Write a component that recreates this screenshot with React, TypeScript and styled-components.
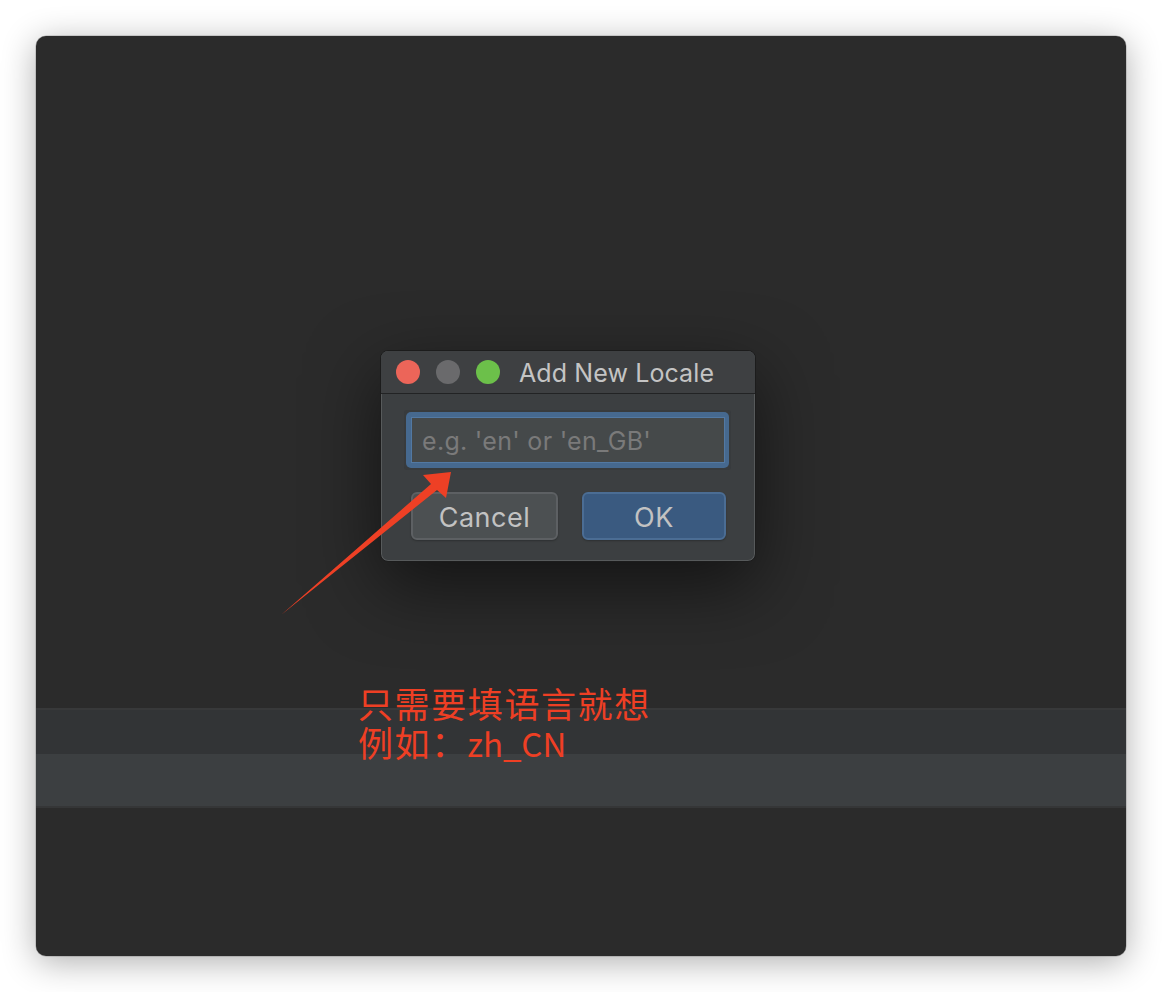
import * as React from 'react'
import styled, { createGlobalStyle } from 'styled-components'

const GlobalStyle = createGlobalStyle`
    html, body {
        margin: 0;
        padding: 0;
        background: #ffffff;
    }
    * {
        box-sizing: border-box;
    }
`

export default function App() {
    return (
        <Page>
            <GlobalStyle />
            <Window>
                <Stage>
                    <Dialog>
                        <TitleBar>
                            <Lights>
                                <Light color={'#ec6559'} />
                                <Light color={'#6a6a6c'} />
                                <Light color={'#6cc04a'} />
                            </Lights>
                            <Title>Add New Locale</Title>
                        </TitleBar>
                        <DialogBody>
                            <FocusHalo>
                                <FocusRing>
                                    <Field placeholder="e.g. 'en' or 'en_GB'" />
                                </FocusRing>
                            </FocusHalo>
                            <Buttons>
                                <Button>Cancel</Button>
                                <Button primary>OK</Button>
                            </Buttons>
                        </DialogBody>
                    </Dialog>
                </Stage>
                <Divider tone={'#38393a'} />
                <Band tone={'#323436'} size={44} />
                <Band tone={'#3c3f41'} size={52} />
                <Divider tone={'#353637'} />
                <Rest />

                <ArrowLayer width="1090" height="920" viewBox="0 0 1090 920">
                    <polygon
                        points="245,579 395,448 387,439 415,436 410,462 401,454"
                        fill="#ee4025"
                    />
                </ArrowLayer>
                <Note>
                    <NoteLine>只需要填语言就想</NoteLine>
                    <NoteLine>
                        例如：<Latin> zh_CN</Latin>
                    </NoteLine>
                </Note>
            </Window>
        </Page>
    )
}

const Page = styled.div`
    width: 1162px;
    height: 992px;
    padding: 36px;
`
const Window = styled.div`
    position: relative;
    display: flex;
    flex-direction: column;
    width: 1090px;
    height: 920px;
    background-color: #2b2b2b;
    border-radius: 10px;
    box-shadow: 0 0 0 0.5px rgba(0, 0, 0, 0.25), 0 6px 34px rgba(0, 0, 0, 0.32);
    font-family: Inter, 'Liberation Sans', sans-serif;
`
const Stage = styled.div`
    height: 672px;
    padding: 314px 0 0 344px;
`
const Dialog = styled.div`
    display: flex;
    flex-direction: column;
    width: 376px;
    height: 212px;
    background-color: #3c3f41;
    border: 1px solid #1c1c1c;
    border-radius: 8px;
    box-shadow: inset 0 0 0 1px rgba(255, 255, 255, 0.14),
        0 24px 70px rgba(0, 0, 0, 0.55);
`
const TitleBar = styled.div`
    display: flex;
    align-items: center;
    height: 43px;
    padding-left: 15px;
    border-bottom: 1px solid #222324;
    background-color: #3e4042;
    border-radius: 7px 7px 0 0;
`
const Lights = styled.div`
    display: flex;
    gap: 16px;
    margin-right: 19px;
`
const Light = styled.div`
    width: 24px;
    height: 24px;
    border-radius: 50%;
    background-color: ${props => props.color || '#888'};
`
const Title = styled.div`
    font-size: 25px;
    color: #c4c4c4;
    letter-spacing: 0.1px;
    margin-top: 1px;
`
const DialogBody = styled.div`
    display: flex;
    flex-direction: column;
    padding: 16px 0 0 23px;
`
const FocusHalo = styled.div`
    width: 327px;
    height: 60px;
    padding: 2px;
    background-color: #383b3d;
    border-radius: 3px;
`
const FocusRing = styled.div`
    width: 100%;
    height: 100%;
    padding: 5px 4px 5px 5px;
    background-color: #46698f;
    border-radius: 5px;
`
const Field = styled.input`
    display: block;
    width: 100%;
    height: 100%;
    margin: 0;
    padding: 2px 0 0 10px;
    border: 1px solid #5279a3;
    background-color: #45494a;
    color: #bbbbbb;
    font-family: Inter, 'Liberation Sans', sans-serif;
    font-size: 25px;
    letter-spacing: 0.3px;
    outline: none;

    &::placeholder {
        color: #7a7a7a;
    }
`
const Buttons = styled.div`
    display: flex;
    gap: 24px;
    margin-top: 22px;
    padding-left: 7px;
`
const Button = styled.button<{ primary?: boolean }>`
    width: ${props => (props.primary ? '144px' : '147px')};
    height: 48px;
    padding: 2px 0 0;
    border: 2px solid ${props => (props.primary ? '#4b6d94' : '#5d6063')};
    border-radius: 6px;
    background-color: ${props => (props.primary ? '#3a5a80' : '#4c5052')};
    color: #c2c2c2;
    font-family: Inter, 'Liberation Sans', sans-serif;
    font-size: 27px;
    letter-spacing: 0.5px;
    box-shadow: 0 1px 2px rgba(0, 0, 0, 0.25);
`
const Divider = styled.div<{ tone: string }>`
    height: 2px;
    background-color: ${props => props.tone};
`
const Band = styled.div<{ tone: string; size: number }>`
    height: ${props => props.size}px;
    background-color: ${props => props.tone};
`
const Rest = styled.div`
    flex: 1;
`
const ArrowLayer = styled.svg`
    position: absolute;
    left: 0;
    top: 0;
    pointer-events: none;
`
const Note = styled.div`
    position: absolute;
    left: 322px;
    top: 647px;
    display: flex;
    flex-direction: column;
    font-family: 'Noto Sans CJK SC', 'Noto Sans', sans-serif;
    font-size: 35px;
    line-height: 39px;
    letter-spacing: 1.6px;
    color: #ee3f24;
    white-space: pre;
`
const NoteLine = styled.div``
const Latin = styled.span`
    font-size: 33px;
    letter-spacing: 0;
    margin-left: -8px;
`
